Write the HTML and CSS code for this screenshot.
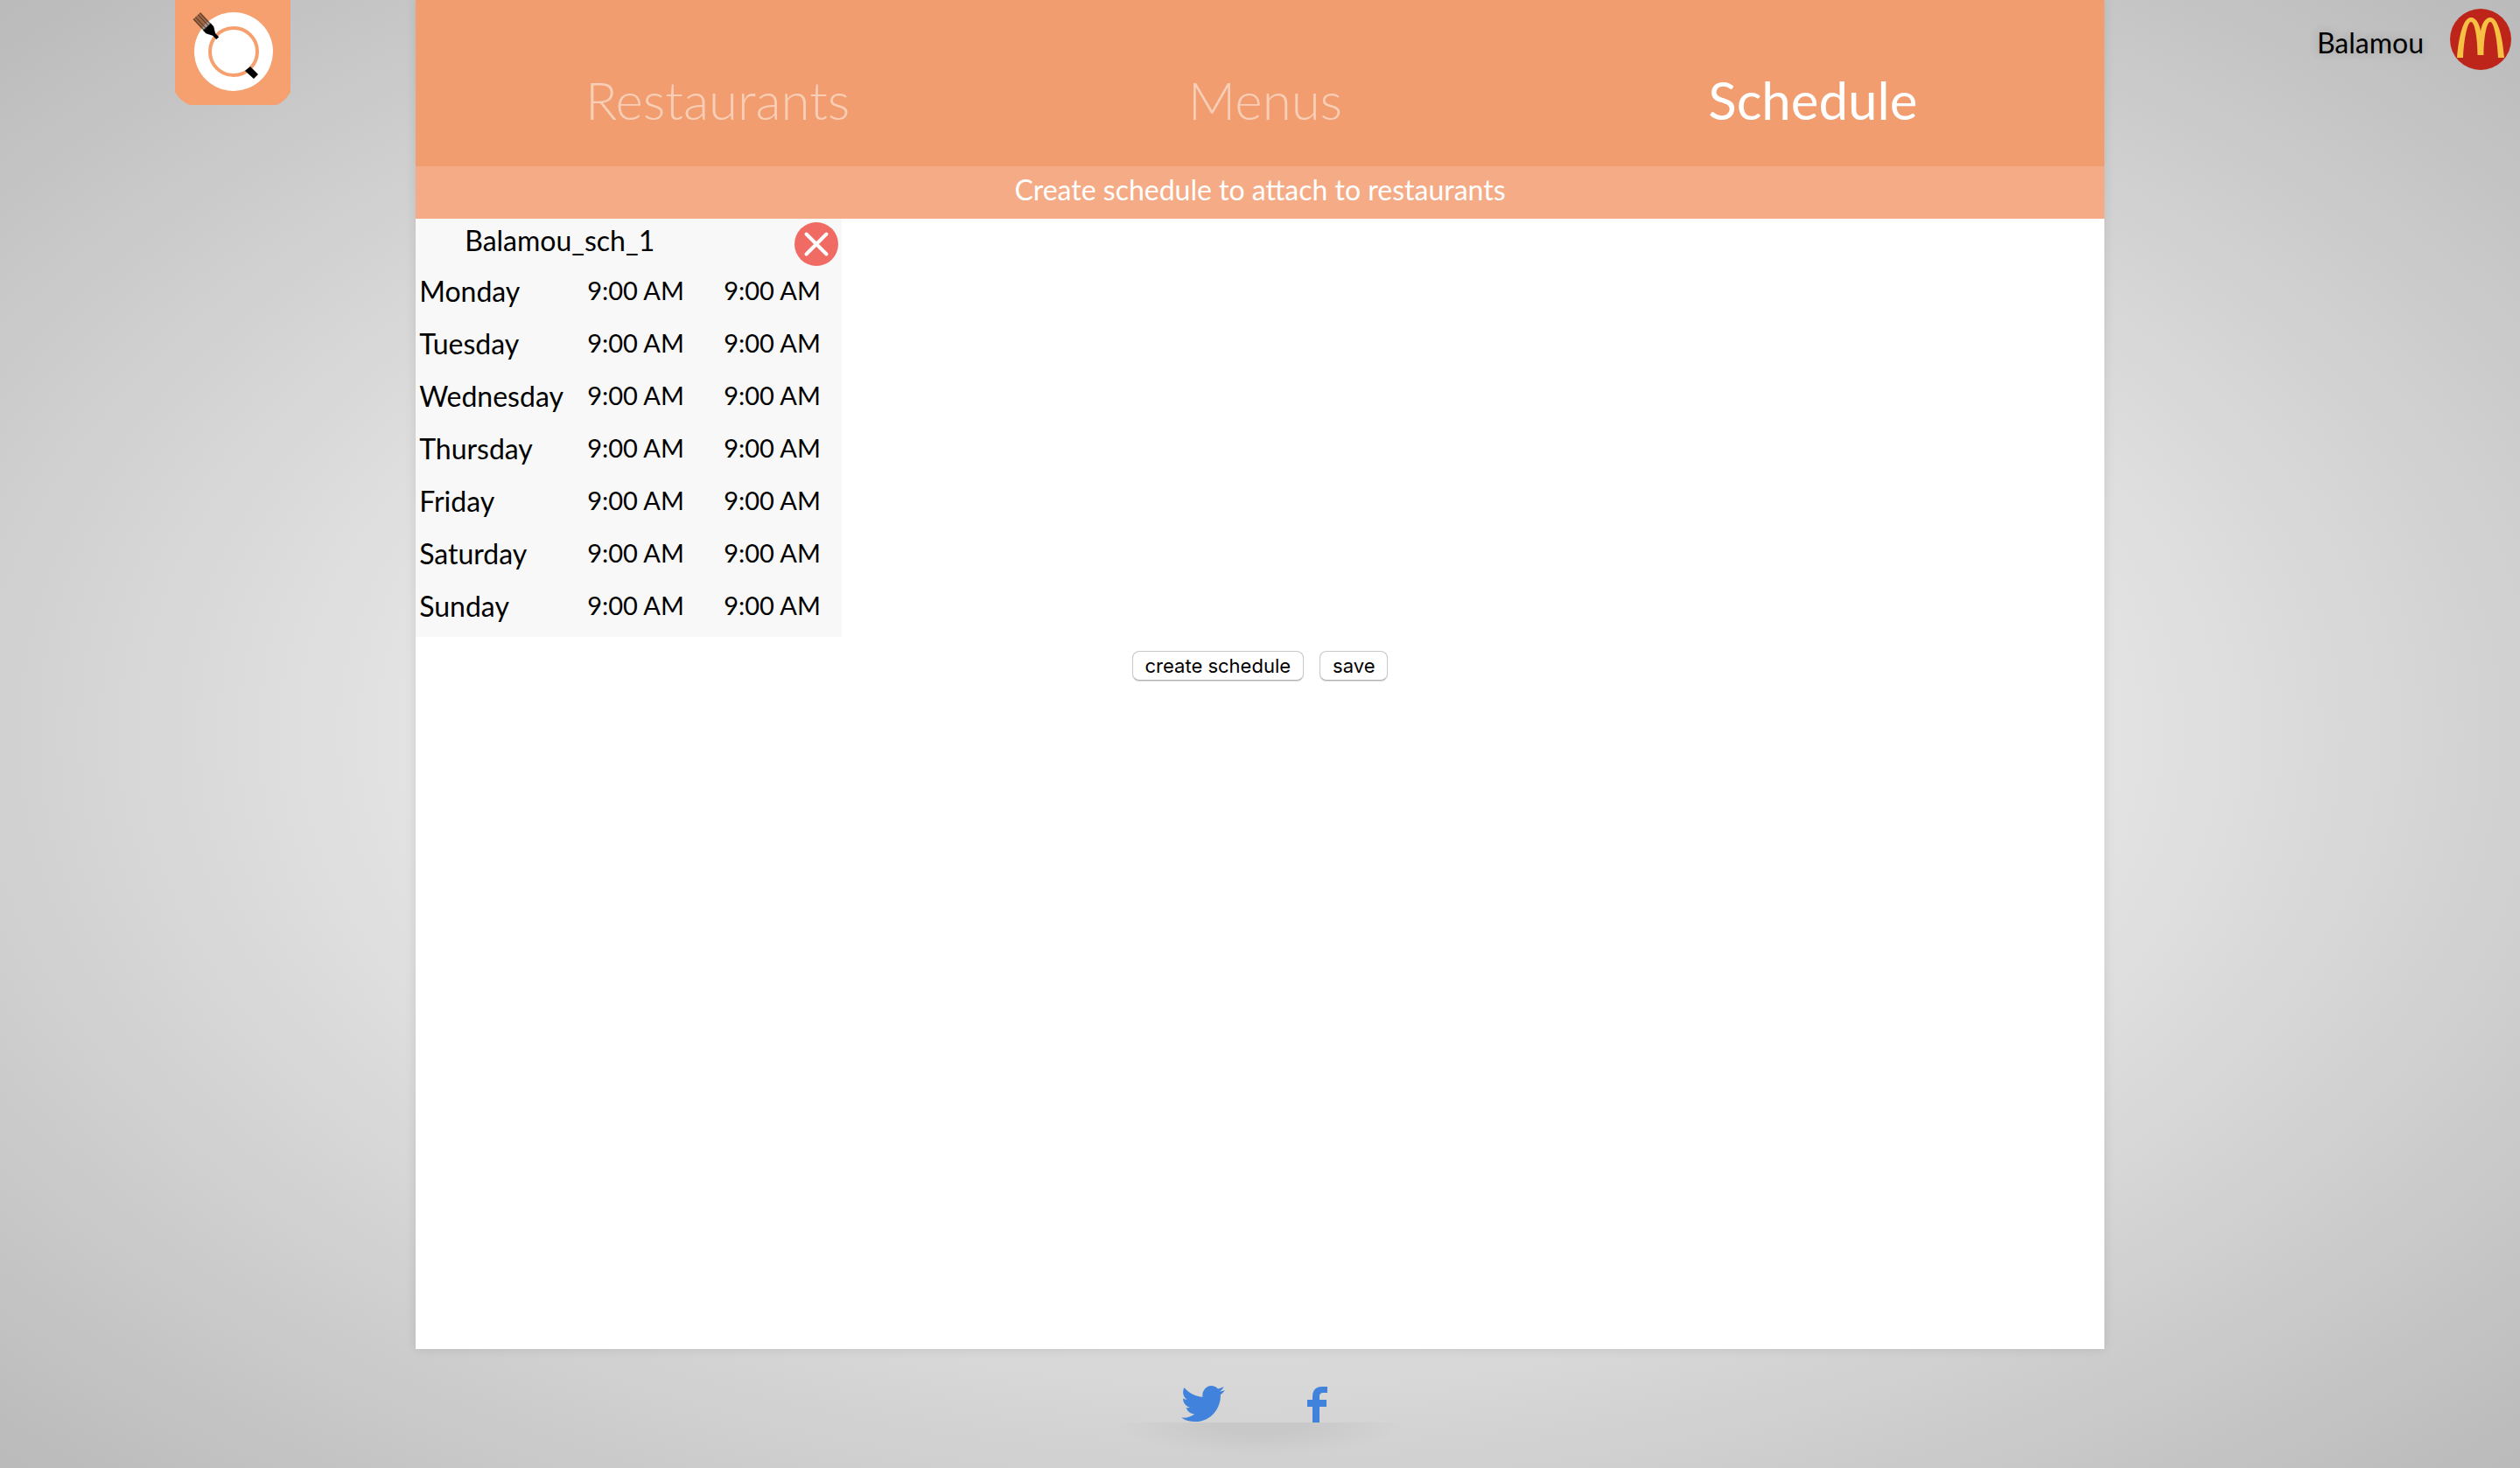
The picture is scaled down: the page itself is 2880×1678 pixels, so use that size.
FILE: index.html
```html
<!DOCTYPE html>
<html lang="en">
<head>
<meta charset="utf-8">
<title>Schedule</title>
<link rel="stylesheet" href="styles.css">
</head>
<body>
<div class="page">
  <div class="side">
    <a class="logo" href="#" aria-label="Home">
      <svg viewBox="0 0 132 120" aria-hidden="true">
        <path d="M0 0H132V105Q126 116 116 120H17Q6 116 0 105Z" fill="#f5a06e"/>
        <circle cx="67" cy="59" r="45" fill="#fff"/>
        <circle cx="67" cy="59" r="27" fill="none" stroke="#f5a06e" stroke-width="4"/>
        <g transform="translate(48 43) rotate(-43)">
          <path d="M-2 1V-5L-6 -12V-17H6V-12L2 -5V1Z" fill="#000"/>
          <path d="M-6 -16H6V-34H-6Z" fill="#3a2418" opacity=".45"/>
          <path d="M-5 -16V-34M-2 -16V-34M2 -16V-34M5 -16V-34" stroke="#2a1a10" stroke-width="1" opacity=".6"/>
        </g>
        <path d="M80 81L86 76L95 85L90 90Z" fill="#000"/>
      </svg>
    </a>
  </div>

  <main class="panel">
    <nav class="tabs">
      <a class="tab" href="#">Restaurants</a>
      <a class="tab" href="#">Menus</a>
      <a class="tab tab-active" href="#" aria-current="page">Schedule</a>
    </nav>
    <p class="hint">Create schedule to attach to restaurants</p>

    <section class="card">
      <header class="card-head">
        <h2 class="card-title">Balamou_sch_1</h2>
        <button class="remove" type="button" aria-label="Delete schedule">
          <svg viewBox="0 0 50 50" aria-hidden="true">
            <circle cx="25" cy="25" r="25" fill="#ef6b64"/>
            <path d="M13.500 13.500L36.500 36.500M36.500 13.500L13.500 36.500" stroke="#fff" stroke-width="4" stroke-linecap="round"/>
          </svg>
        </button>
      </header>
      <table class="hours">
        <tbody>
          <tr><th scope="row">Monday</th><td>9:00 AM</td><td>9:00 AM</td></tr>
          <tr><th scope="row">Tuesday</th><td>9:00 AM</td><td>9:00 AM</td></tr>
          <tr><th scope="row">Wednesday</th><td>9:00 AM</td><td>9:00 AM</td></tr>
          <tr><th scope="row">Thursday</th><td>9:00 AM</td><td>9:00 AM</td></tr>
          <tr><th scope="row">Friday</th><td>9:00 AM</td><td>9:00 AM</td></tr>
          <tr><th scope="row">Saturday</th><td>9:00 AM</td><td>9:00 AM</td></tr>
          <tr><th scope="row">Sunday</th><td>9:00 AM</td><td>9:00 AM</td></tr>
        </tbody>
      </table>
    </section>

    <div class="actions">
      <button class="btn" type="button">create schedule</button>
      <button class="btn" type="button">save</button>
    </div>
  </main>

  <div class="account">
    <span class="account-name">Balamou</span>
    <svg class="avatar" viewBox="0 0 70 70" role="img" aria-label="Account picture">
      <circle cx="35" cy="35" r="35" fill="#bd251b"/>
      <path d="M8 56C10 32 15 10 24 10C30 10 34 18 35 26C36 18 40 10 46 10C55 10 60 32 62 56H55C54 34 50 15 46 15C42 15 38.500 32 38.500 53H31.500C31.500 32 28 15 24 15C20 15 16 34 15 56Z" fill="#f7c244"/>
    </svg>
  </div>
</div>

<footer class="footer">
  <div class="social">
    <a href="#" aria-label="Twitter">
      <svg class="bird" viewBox="0 0 24 20" preserveAspectRatio="none" aria-hidden="true"><path d="M23.950 2.370a10 10 0 0 1-2.820.770 4.960 4.960 0 0 0 2.160-2.720c-.950.560-2 .960-3.120 1.190a4.920 4.920 0 0 0-8.380 4.480C7.690 5.890 4.070 3.930 1.640.960a4.820 4.820 0 0 0-.670 2.480c0 1.700.870 3.210 2.190 4.100a4.900 4.900 0 0 1-2.230-.620v.060a4.920 4.920 0 0 0 3.950 4.830 5 5 0 0 1-2.210.080 4.940 4.940 0 0 0 4.600 3.420A9.870 9.870 0 0 1 0 17.340a13.990 13.990 0 0 0 7.550 2.210c9.050 0 14-7.500 14-13.980 0-.210 0-.420-.020-.630a9.940 9.940 0 0 0 2.460-2.550z" fill="#4183dc"/></svg>
    </a>
    <a href="#" aria-label="Facebook">
      <svg class="face" viewBox="0 0 23 41" aria-hidden="true"><path d="M6 41V23H0V15H6V12Q6 0 17 0H23V7H18Q14 7 14 11V15H22V23H14V41Z" fill="#4183dc"/></svg>
    </a>
  </div>
</footer>
</body>
</html>
```
FILE: styles.css
```css
* {
  box-sizing: border-box;
}

body {
  margin: 0;
  min-height: 100vh;
  font-family: Lato, "Open Sans", sans-serif;
  font-size: 32px;
  color: #000;
  background: radial-gradient(ellipse at center, #fff 12%, #b9bab9 100%);
}

.page {
  display: grid;
  grid-template-columns: 1fr 67% 1fr;
  min-height: calc(100vh - 136px);
}

.logo {
  display: block;
  width: 132px;
  margin-left: 200px;
}

.logo svg,
.remove svg,
.social svg {
  display: block;
}

.panel {
  background: #fff;
  box-shadow: 0 0 12px rgba(0, 0, 0, 0.1);
}

.tabs {
  display: grid;
  grid-template-columns: repeat(3, 1fr);
  height: 190px;
  padding: 80px 20px 0 32px;
  background: #f19d6f;
}

.tab {
  font-size: 60px;
  font-weight: 300;
  line-height: 68px;
  text-align: center;
  text-decoration: none;
  color: rgba(255, 255, 255, 0.5);
}

.tab-active {
  font-weight: 400;
  color: #fff;
}

.hint {
  height: 60px;
  margin: 0;
  line-height: 54px;
  text-align: center;
  color: #fff;
  background: #f5ac86;
}

.card {
  width: 487px;
  background: #f8f8f8;
}

.card-head {
  display: flex;
  justify-content: space-between;
  height: 58px;
  padding: 4px 4px 0 56px;
}

.card-title {
  margin: 0;
  font-size: 32px;
  font-weight: 400;
  line-height: 42px;
}

.remove {
  width: 50px;
  height: 50px;
  padding: 0;
  border: 0;
  background: none;
}

.hours {
  width: 100%;
  table-layout: fixed;
  border-collapse: collapse;
}

.hours tr {
  height: 60px;
}

.hours th,
.hours td {
  padding: 0;
  text-align: left;
  vertical-align: top;
}

.hours th {
  width: 196px;
  padding-left: 4px;
  font-weight: 400;
  line-height: 50px;
}

.hours td {
  width: 156px;
  font-size: 29px;
  line-height: 48px;
}

.actions {
  display: flex;
  justify-content: center;
  gap: 18px;
  padding-top: 16px;
}

.btn {
  height: 34px;
  padding: 0 14px;
  font-family: Inter, sans-serif;
  font-size: 22px;
  line-height: 30px;
  color: #000;
  background: #fff;
  border: 1px solid #c8c8c8;
  border-bottom-color: #b0b0b0;
  border-radius: 8px;
  box-shadow: 0 1px 1px rgba(0, 0, 0, 0.15);
}

.account {
  display: flex;
  justify-content: flex-end;
  align-items: flex-start;
  gap: 30px;
  padding: 10px 10px 0 0;
}

.account-name {
  line-height: 78px;
  text-shadow: 0 0 12px rgba(0, 0, 0, 0.2);
}

.avatar {
  width: 70px;
  height: 70px;
}

.footer {
  display: flex;
  flex-direction: column;
  align-items: center;
  height: 136px;
  padding-top: 42px;
}

.social {
  display: flex;
  align-items: flex-end;
  gap: 94px;
  padding-right: 14px;
}

.bird {
  width: 50px;
  height: 42px;
}

.face {
  width: 23px;
  height: 41px;
}

.footer::after {
  content: "";
  width: 340px;
  height: 40px;
  background: radial-gradient(ellipse at top, rgba(0, 0, 0, 0.06) 20%, transparent 70%);
}
```
